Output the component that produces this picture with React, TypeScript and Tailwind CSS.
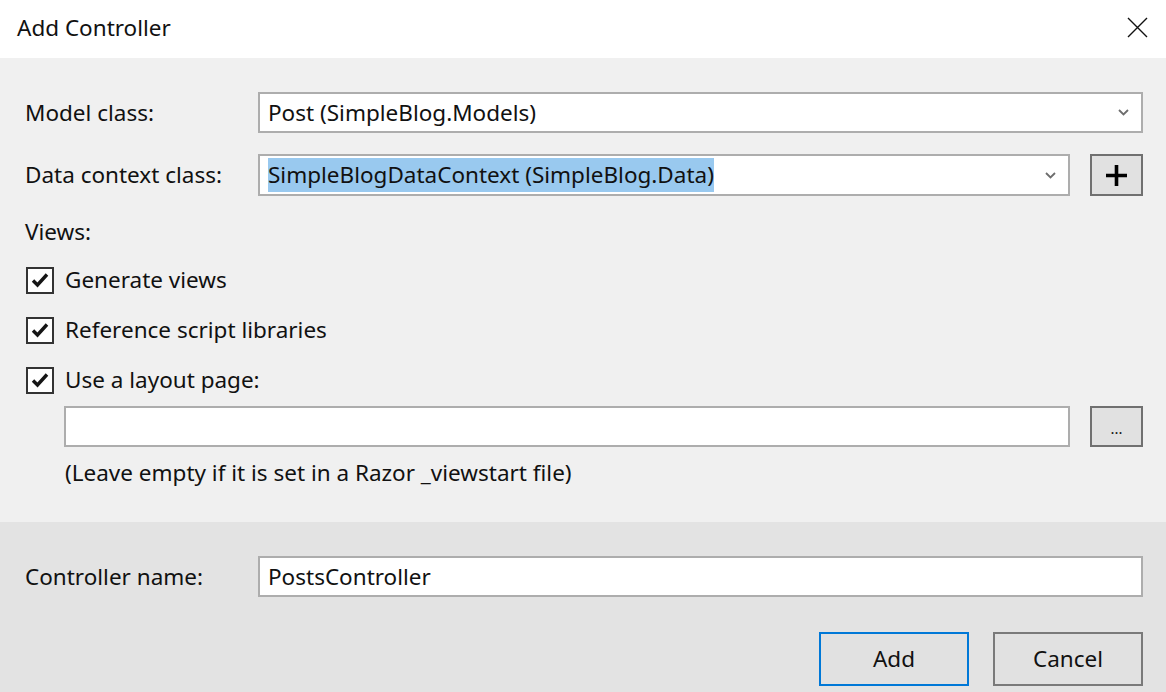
const font = "font-['Noto_Sans','Open_Sans',sans-serif]";

function Chevron() {
  return (
    <svg width="11" height="7" viewBox="0 0 11 7" className="shrink-0">
      <path d="M1 1 L5.5 5.5 L10 1" fill="none" stroke="#6d6d6d" strokeWidth="1.8" />
    </svg>
  );
}

function Combo({ children, className }: { children: React.ReactNode; className: string }) {
  return (
    <div className={`flex items-center bg-white border-2 border-[#adadad] pl-[8px] pr-[12px] ${className}`}>
      <div className="flex-1 min-w-0 truncate">{children}</div>
      <Chevron />
    </div>
  );
}

function CheckRow({ label }: { label: string }) {
  return (
    <div className="flex items-center h-[50px] gap-[11px] pl-[1px]">
      <div className="w-[28px] h-[27px] border-2 border-[#333333] bg-white flex items-center justify-center">
        <svg width="18" height="16" viewBox="0 0 18 16">
          <path d="M2 8.5 L6.5 13 L16 2.5" fill="none" stroke="#151515" strokeWidth="3.4" />
        </svg>
      </div>
      <span>{label}</span>
    </div>
  );
}

export default function App() {
  return (
    <div className={`w-[1166px] h-[692px] flex flex-col text-[22.5px] text-[#111111] ${font}`}>
      <div className="h-[58px] bg-white flex items-center justify-between pl-[17px] pr-[18px]">
        <span className="-mt-[3px]">Add Controller</span>
        <svg width="21" height="21" viewBox="0 0 21 21" className="-mt-[4px]">
          <path d="M1 1 L20 20 M20 1 L1 20" stroke="#111" strokeWidth="1.4" />
        </svg>
      </div>

      <div className="h-[464px] bg-[#f0f0f0] pl-[25px] pr-[23px] pt-[34px] flex flex-col">
        <div className="flex items-center h-[41px]">
          <span className="w-[233px]">Model class:</span>
          <Combo className="flex-1 h-[41px]">Post (SimpleBlog.Models)</Combo>
        </div>

        <div className="flex items-center h-[42px] mt-[21px]">
          <span className="w-[233px]">Data context class:</span>
          <Combo className="flex-1 h-[42px]">
            <span className="bg-[#99c9ef] py-[2px]">SimpleBlogDataContext (SimpleBlog.Data)</span>
          </Combo>
          <button className="ml-[20px] w-[53px] h-[42px] bg-[#e1e1e1] border-2 border-[#707070] flex items-center justify-center">
            <svg width="21" height="21" viewBox="0 0 21 21">
              <path d="M10.5 0 V21 M0 10.5 H21" stroke="#000" strokeWidth="3.6" />
            </svg>
          </button>
        </div>

        <div className="h-[36px] mt-[18px] flex items-center">Views:</div>

        <div className="mt-[5px] flex flex-col">
          <CheckRow label="Generate views" />
          <CheckRow label="Reference script libraries" />
          <CheckRow label="Use a layout page:" />
        </div>

        <div className="flex items-center mt-[1px] pl-[39px]">
          <div className="flex-1 h-[41px] bg-white border-2 border-[#adadad]" />
          <button className="ml-[20px] w-[53px] h-[41px] bg-[#e1e1e1] border-2 border-[#707070] flex items-end justify-center pb-[9px] text-[15px] leading-none">
            ...
          </button>
        </div>

        <div className="h-[30px] mt-[11px] pl-[40px] flex items-center">
          (Leave empty if it is set in a Razor _viewstart file)
        </div>
      </div>

      <div className="flex-1 bg-[#e3e3e3] pl-[25px] pr-[23px] pt-[34px] flex flex-col">
        <div className="flex items-center h-[41px]">
          <span className="w-[233px]">Controller name:</span>
          <div className="flex-1 h-[41px] bg-white border-2 border-[#adadad] pl-[8px] flex items-center">
            PostsController
          </div>
        </div>
        <div className="flex justify-end gap-[24px] mt-[35px]">
          <button className="w-[150px] h-[54px] bg-[#e1e1e1] border-2 border-[#0078d7]">Add</button>
          <button className="w-[150px] h-[54px] bg-[#e1e1e1] border-2 border-[#7a7a7a]">Cancel</button>
        </div>
      </div>
    </div>
  );
}
